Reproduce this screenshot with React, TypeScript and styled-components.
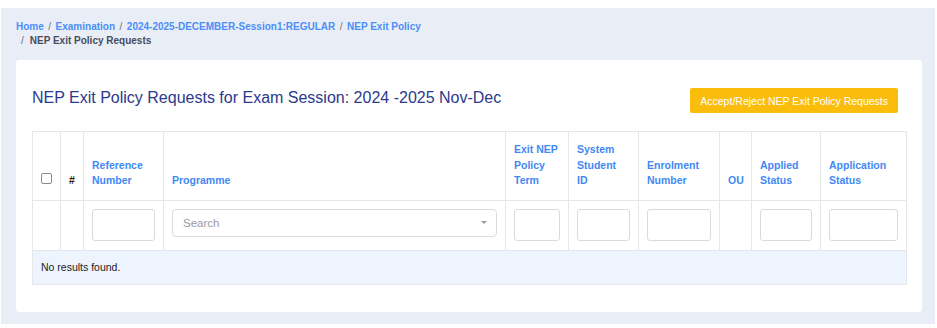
import React from "react";
import styled, { createGlobalStyle } from "styled-components";

const GlobalStyle = createGlobalStyle`
  * { box-sizing: border-box; }
  body {
    margin: 0;
    background: #fff;
    font-family: "Liberation Sans", Arial, Helvetica, sans-serif;
  }
`;

type Column = {
  key: string;
  label: React.ReactNode;
  width: number;
  filter?: "input" | "select";
};

const columns: Column[] = [
  { key: "check", label: null, width: 28 },
  { key: "num", label: "#", width: 23 },
  { key: "ref", label: ["Reference", "Number"], width: 80, filter: "input" },
  { key: "prog", label: ["Programme"], width: 342, filter: "select" },
  { key: "term", label: ["Exit NEP", "Policy", "Term"], width: 63, filter: "input" },
  { key: "sid", label: ["System", "Student", "ID"], width: 70, filter: "input" },
  { key: "enrol", label: ["Enrolment", "Number"], width: 81, filter: "input" },
  { key: "ou", label: ["OU"], width: 32 },
  { key: "applied", label: ["Applied", "Status"], width: 69, filter: "input" },
  { key: "status", label: ["Application", "Status"], width: 86, filter: "input" },
];

const crumbs = ["Home", "Examination", "2024-2025-DECEMBER-Session1:REGULAR", "NEP Exit Policy"];

const renderLabel = (label: React.ReactNode) => {
  if (!Array.isArray(label)) return label;
  return label.map((line, i) => (
    <React.Fragment key={i}>
      {i > 0 && <br />}
      {line}
    </React.Fragment>
  ));
};

const App: React.FC = () => {
  return (
    <Page>
      <GlobalStyle />
      <Panel>
        <Breadcrumb>
          <CrumbLine>
            {crumbs.map((c, i) => (
              <React.Fragment key={c}>
                {i > 0 && <Sep>/</Sep>}
                <CrumbLink>{c}</CrumbLink>
              </React.Fragment>
            ))}
          </CrumbLine>
          <CrumbLine $indent>
            <Sep>/</Sep>
            <CrumbCurrent>NEP Exit Policy Requests</CrumbCurrent>
          </CrumbLine>
        </Breadcrumb>

        <Card>
          <CardHeader>
            <Title>NEP Exit Policy Requests for Exam Session: 2024 -2025 Nov-Dec</Title>
            <ActionButton type="button">Accept/Reject NEP Exit Policy Requests</ActionButton>
          </CardHeader>

          <Table>
            <colgroup>
              {columns.map((col) => (
                <col key={col.key} style={{ width: col.width }} />
              ))}
            </colgroup>
            <thead>
              <tr>
                {columns.map((col) => (
                  <HeadCell key={col.key} $dark={col.key === "num"}>
                    {col.key === "check" ? <CheckBox /> : renderLabel(col.label)}
                  </HeadCell>
                ))}
              </tr>
              <tr>
                {columns.map((col) => (
                  <FilterCell key={col.key}>
                    {col.filter === "input" && <FilterInput type="text" />}
                    {col.filter === "select" && (
                      <SelectBox>
                        <Placeholder>Search</Placeholder>
                        <Caret />
                      </SelectBox>
                    )}
                  </FilterCell>
                ))}
              </tr>
            </thead>
            <tbody>
              <tr>
                <EmptyCell colSpan={columns.length}>No results found.</EmptyCell>
              </tr>
            </tbody>
          </Table>
        </Card>
      </Panel>
    </Page>
  );
};

export default App;

const Page = styled.div`
  width: 937px;
  height: 328px;
  padding: 8px 2px 4px 1px;
`;

const Panel = styled.div`
  height: 316px;
  background: #e9edf6;
  padding: 11.5px 13px 12px 15px;
`;

const Breadcrumb = styled.nav`
  font-size: 10px;
  font-weight: 700;
  line-height: 14px;
`;

const CrumbLine = styled.div<{ $indent?: boolean }>`
  display: flex;
  align-items: center;
  white-space: nowrap;
  padding-left: ${({ $indent }) => ($indent ? "5px" : "0")};
`;

const CrumbLink = styled.span`
  color: #4c8ff7;
`;

const CrumbCurrent = styled.span`
  color: #464d5e;
`;

const Sep = styled.span`
  color: #6b6f78;
  font-weight: 400;
  padding: 0 4.5px;
  &:first-child {
    padding-left: 0;
    padding-right: 6px;
  }
`;

const Card = styled.div`
  margin-top: 12.5px;
  height: 252px;
  background: #fff;
  border-radius: 3px;
  padding: 28px 16px 28px 16px;
`;

const CardHeader = styled.div`
  display: flex;
  justify-content: space-between;
  align-items: flex-start;
  height: 25px;
  margin-bottom: 18px;
  padding-right: 8px;
`;

const Title = styled.h2`
  margin: 0;
  font-size: 16px;
  line-height: 20px;
  font-weight: 400;
  color: #2c3a8c;
`;

const ActionButton = styled.button`
  height: 25px;
  padding: 0 10px;
  border: none;
  border-radius: 2px;
  background: #fbbd0b;
  color: #fff;
  font-family: inherit;
  font-size: 10.5px;
  cursor: pointer;
`;

const Table = styled.table`
  width: 874px;
  table-layout: fixed;
  border-collapse: collapse;
  border: 1px solid #e3e6eb;
`;

const HeadCell = styled.th<{ $dark?: boolean }>`
  border: 1px solid #e3e6eb;
  padding: 10px 8px 11px 8px;
  height: 68px;
  vertical-align: bottom;
  text-align: left;
  font-size: 10.5px;
  line-height: 15.5px;
  font-weight: 700;
  white-space: nowrap;
  color: ${({ $dark }) => ($dark ? "#222" : "#3f88f5")};
`;

const CheckBox = styled.span`
  display: block;
  width: 11px;
  height: 11px;
  margin: 0 0 5px 0;
  border: 1px solid #8c8c8c;
  border-radius: 2px;
  background: #fff;
`;

const FilterCell = styled.td`
  border: 1px solid #e3e6eb;
  padding: 8px 8px 9px 8px;
  height: 50px;
  vertical-align: top;
`;

const FilterInput = styled.input`
  display: block;
  width: 100%;
  height: 32px;
  border: 1px solid #d8dce1;
  border-radius: 3px;
  background: #fff;
  outline: none;
`;

const SelectBox = styled.div`
  display: flex;
  align-items: center;
  justify-content: space-between;
  height: 28px;
  padding: 0 9px 0 10px;
  border: 1px solid #d8dce1;
  border-radius: 4px;
  background: #fff;
`;

const Placeholder = styled.span`
  font-size: 11.5px;
  color: #9a9a9a;
`;

const Caret = styled.span`
  width: 0;
  height: 0;
  border-left: 3px solid transparent;
  border-right: 3px solid transparent;
  border-top: 3px solid #9a9a9a;
`;

const EmptyCell = styled.td`
  border: 1px solid #e3e6eb;
  background: #eef4fd;
  height: 34px;
  padding: 0 8px;
  font-size: 10.5px;
  color: #222;
`;
